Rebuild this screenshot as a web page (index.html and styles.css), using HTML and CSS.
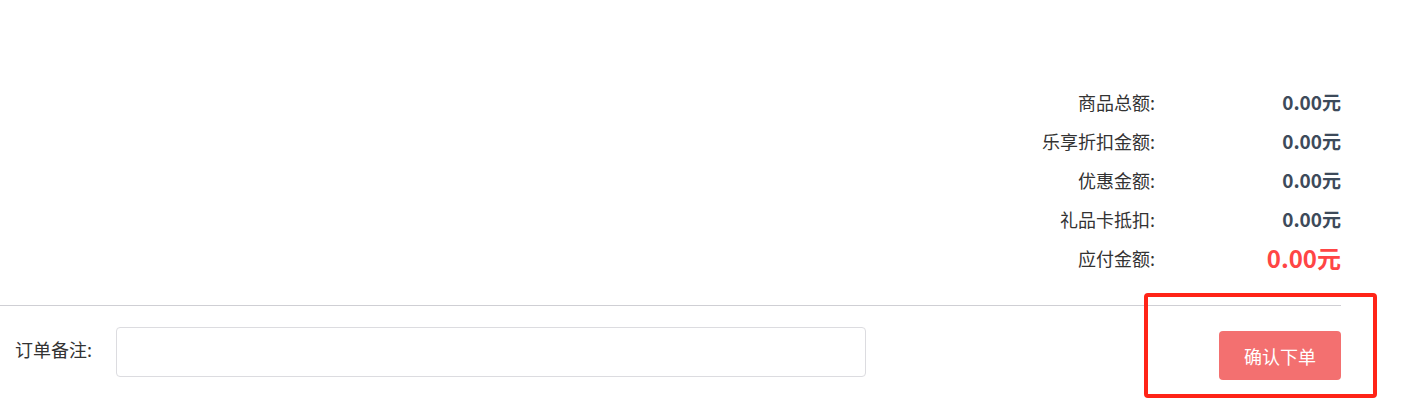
FILE: index.html
```html
<!DOCTYPE html>
<html>
<head>
<meta charset="UTF-8">
<title>确认订单</title>
<link rel="stylesheet" href="styles.css">
</head>
<body>

<div class="order">
	<!-- 金额汇总 -->
	<div class="summary">
		<div class="row"><span class="lbl">商品总额:</span><span class="val">0.00元</span></div>
		<div class="row"><span class="lbl">乐享折扣金额:</span><span class="val">0.00元</span></div>
		<div class="row"><span class="lbl">优惠金额:</span><span class="val">0.00元</span></div>
		<div class="row"><span class="lbl">礼品卡抵扣:</span><span class="val">0.00元</span></div>
		<div class="row"><span class="lbl">应付金额:</span><span class="val pay">0.00元</span></div>
	</div>

	<hr class="line">

	<div class="bottom">
		<label class="remarkLbl" for="remark">订单备注:</label>
		<input type="text" id="remark" class="remark">
		<button type="button" class="btnOrder">确认下单</button>
	</div>

	<div class="mark"></div>
</div>

</body>
</html>
```

FILE: styles.css
```css
* {box-sizing: border-box;}
body {margin: 0; background: #fff; font-family: "Noto Sans CJK SC", "Microsoft YaHei", sans-serif; color: #333;}
.order {position: relative; width: 1341px; height: 420px;}
.summary {padding-top: 82px; height: 279px;}
.row {display: flex; justify-content: flex-end; align-items: center; height: 39px;}
.lbl {font-size: 18px; color: #333; text-align: right;}
.val {width: 186px; text-align: right; font-size: 19px; font-weight: bold; color: #3d4a5a;}
.val.pay {font-size: 24px; color: #ff4545;}
.line {margin: 26px 0 0 0; border: 0; border-top: 1px solid #cfcfd4; height: 0;}
.bottom {display: flex; align-items: center; margin-top: 18px; padding-left: 15px;}
.remarkLbl {width: 101px; font-size: 18px; color: #333; margin-bottom: 6px;}
.remark {width: 750px; height: 50px; border: 1px solid #dcdce0; border-radius: 4px; outline: none; padding: 0 10px; font-size: 14px;}
.remark:focus {border-color: #bbb;}
.btnOrder {margin-left: auto; margin-top: 7px; width: 122px; height: 49px; border: 0; border-radius: 4px; background: #f37070; color: #fff; font-size: 18px; font-family: inherit; cursor: pointer;}
.mark {position: absolute; left: 1144px; top: 293px; width: 233px; height: 105px; border: 4px solid #ff2418; border-radius: 4px;}
```
